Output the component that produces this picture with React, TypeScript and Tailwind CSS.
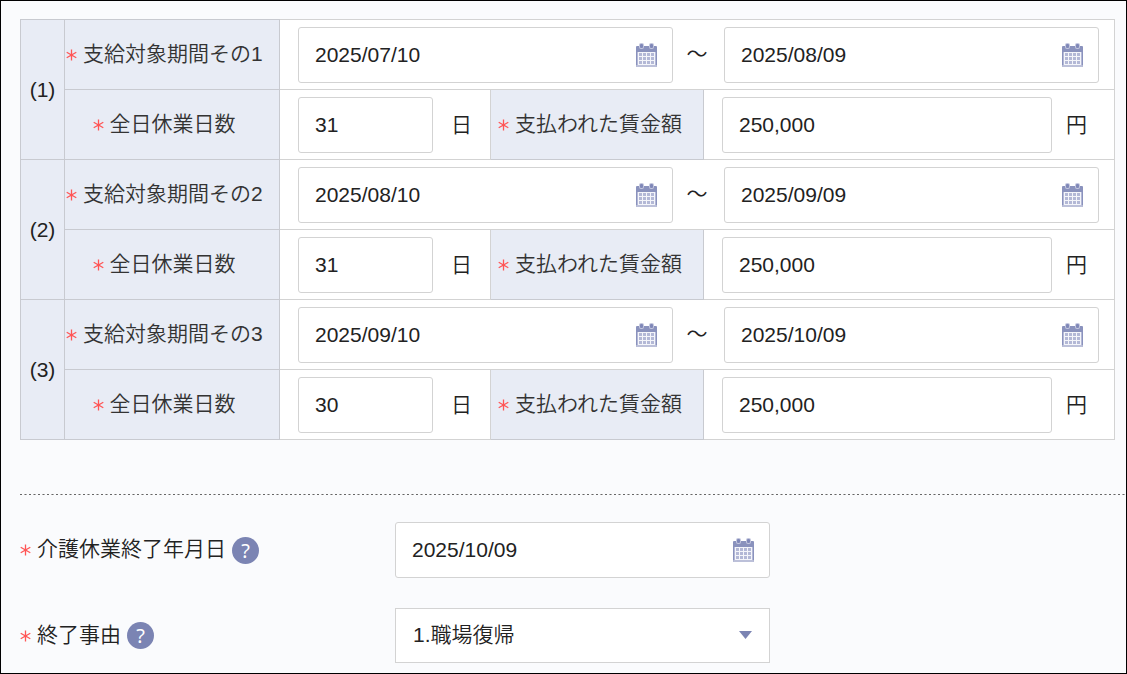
import React, { useState } from "react";

const periods = [
    { no: 1, from: "2025/07/10", to: "2025/08/09", days: "31", wage: "250,000" },
    { no: 2, from: "2025/08/10", to: "2025/09/09", days: "31", wage: "250,000" },
    { no: 3, from: "2025/09/10", to: "2025/10/09", days: "30", wage: "250,000" },
];

const inputClass =
    "h-14 w-full rounded-[3px] border border-[#d3d3d3] bg-white px-4 text-[21px] font-normal text-[#222] outline-none";

const CalendarIcon = () => (
    <svg width="22" height="24" viewBox="0 0 22 24" aria-hidden="true">
        <rect x="0" y="3" width="21" height="21" rx="1" fill="#8a92bd" />
        <rect x="1" y="9" width="19" height="13" fill="#b3b8d6" />
        {[9, 13, 17, 21].map((y) => (
            <rect key={y} x="2" y={y} width="17" height="1" fill="#f4f5fa" />
        ))}
        {[2, 6, 10, 14, 18].map((x) => (
            <rect key={x} x={x} y="9" width="1" height="12" fill="#f4f5fa" />
        ))}
        <rect x="0" y="22" width="21" height="2" rx="1" fill="#bcc0d9" />
        <rect x="3" y="0" width="5" height="6" rx="2" fill="#c3c7de" />
        <rect x="13" y="0" width="5" height="6" rx="2" fill="#c3c7de" />
        <rect x="4" y="1" width="3" height="4" rx="1" fill="#8088b8" />
        <rect x="14" y="1" width="3" height="4" rx="1" fill="#8088b8" />
    </svg>
);

const Required = () => (
    <svg className="mt-[2px] inline-block shrink-0" width="11" height="12" viewBox="0 0 11 12" role="img" aria-label="必須">
        <path d="M5.5 0.5v11M0.7 3.2l9.6 5.6M10.3 3.2l-9.6 5.6" stroke="#ff5555" strokeWidth="1.3" />
    </svg>
);

const DateField = ({ id, label, value }: { id: string; label?: string; value: string }) => (
    <div className="relative min-w-0 flex-1">
        <input id={id} aria-label={label} type="text" defaultValue={value} className={inputClass} />
        <button type="button" aria-label="カレンダー" className="absolute inset-y-0 right-[15px] flex items-center">
            <CalendarIcon />
        </button>
    </div>
);

const HelpButton = () => (
    <button
        type="button"
        aria-label="ヘルプ"
        className="ml-[6px] size-[27px] rounded-full bg-[#7b84b3] text-center font-['Noto_Sans',sans-serif] text-[20px] leading-[27px] font-normal text-white"
    >
        ?
    </button>
);

const thClass = "border border-[#c8cad0] bg-[#e8ecf5] p-0 font-[350] text-[#333]";
const tdClass = "border border-[#d3d3d3] bg-white p-0";

const PeriodRows = ({ period }: { period: (typeof periods)[number] }) => {
    const { no, from, to, days, wage } = period;

    return (
        <>
            <tr className="h-[70px]">
                <th rowSpan={2} scope="rowgroup" className={`${thClass} text-center`}>
                    <span className="text-[#222]">({no})</span>
                </th>
                <th scope="row" className={thClass}>
                    <label htmlFor={`from-${no}`} className="flex items-center gap-[6px] pb-[2px] pl-px">
                        <Required />
                        支給対象期間その{no}
                    </label>
                </th>
                <td colSpan={3} className={tdClass}>
                    <div className="flex items-center pr-[15px] pl-[18px]">
                        <DateField id={`from-${no}`} value={from} />
                        <span className="w-[51px] pr-[3px] pb-[2px] text-center">～</span>
                        <DateField id={`to-${no}`} label={`支給対象期間その${no} 終了日`} value={to} />
                    </div>
                </td>
            </tr>
            <tr className="h-[70px]">
                <th scope="row" className={thClass}>
                    <label htmlFor={`days-${no}`} className="flex items-center justify-center gap-[6px] pr-4 pb-[2px]">
                        <Required />
                        全日休業日数
                    </label>
                </th>
                <td className={tdClass}>
                    <div className="flex items-center gap-[18px] pl-[18px]">
                        <div className="w-[135px]">
                            <input id={`days-${no}`} type="text" defaultValue={days} className={inputClass} />
                        </div>
                        <span>日</span>
                    </div>
                </td>
                <th scope="row" className={thClass}>
                    <label htmlFor={`wage-${no}`} className="flex items-center gap-[6px] pb-[2px] pl-[7px]">
                        <Required />
                        支払われた賃金額
                    </label>
                </th>
                <td className={tdClass}>
                    <div className="flex items-center gap-[14px] pr-[27px] pl-[18px]">
                        <input id={`wage-${no}`} type="text" defaultValue={wage} className={inputClass} />
                        <span>円</span>
                    </div>
                </td>
            </tr>
        </>
    );
};

export default function App() {
    const [reason, setReason] = useState("1");

    return (
        <main className="min-h-screen border border-black bg-[#fafbfd] pt-[18px] pb-[10px] pl-[19px] font-['Liberation_Sans','Noto_Sans_CJK_JP',sans-serif] text-[21px] leading-[30px] font-[350] text-[#222]">
            <div className="pr-[11px]">
                <table className="w-full table-fixed border-collapse">
                    <colgroup>
                        <col className="w-[44px]" />
                        <col className="w-[215px]" />
                        <col className="w-[211px]" />
                        <col className="w-[213px]" />
                        <col />
                    </colgroup>
                    <tbody>
                        {periods.map((period) => (
                            <PeriodRows key={period.no} period={period} />
                        ))}
                    </tbody>
                </table>
            </div>

            <div className="mt-[54px] h-px bg-[repeating-linear-gradient(90deg,#666_0,#666_2px,transparent_2px,transparent_4px,#aaa_4px,#aaa_5px,#666_5px,#666_6px,#aaa_6px,#aaa_7px,transparent_7px,transparent_9px)]" />

            <div className="mt-[27px] flex items-center">
                <div className="flex w-[375px] items-center">
                    <label htmlFor="end-date" className="flex items-center gap-[6px] pb-[2px]">
                        <Required />
                        介護休業終了年月日
                    </label>
                    <HelpButton />
                </div>
                <div className="flex w-[375px]">
                    <DateField id="end-date" value="2025/10/09" />
                </div>
            </div>

            <div className="mt-[30px] flex items-center">
                <div className="flex w-[375px] items-center">
                    <label htmlFor="end-reason" className="flex items-center gap-[6px] pb-[2px]">
                        <Required />
                        終了事由
                    </label>
                    <HelpButton />
                </div>
                <div className="relative w-[375px]">
                    <select
                        id="end-reason"
                        value={reason}
                        onChange={(e) => setReason(e.target.value)}
                        className="h-[55px] w-full appearance-none border border-[#d3d3d3] bg-white px-[17px] pb-[2px] font-[350] outline-none"
                    >
                        <option value="1">1.職場復帰</option>
                    </select>
                    <svg
                        className="pointer-events-none absolute top-[23px] right-[18px]"
                        width="13"
                        height="8"
                        viewBox="0 0 13 8"
                        aria-hidden="true"
                    >
                        <path d="M0 0h13L6.5 8z" fill="#7b84b3" />
                    </svg>
                </div>
            </div>
        </main>
    );
}
